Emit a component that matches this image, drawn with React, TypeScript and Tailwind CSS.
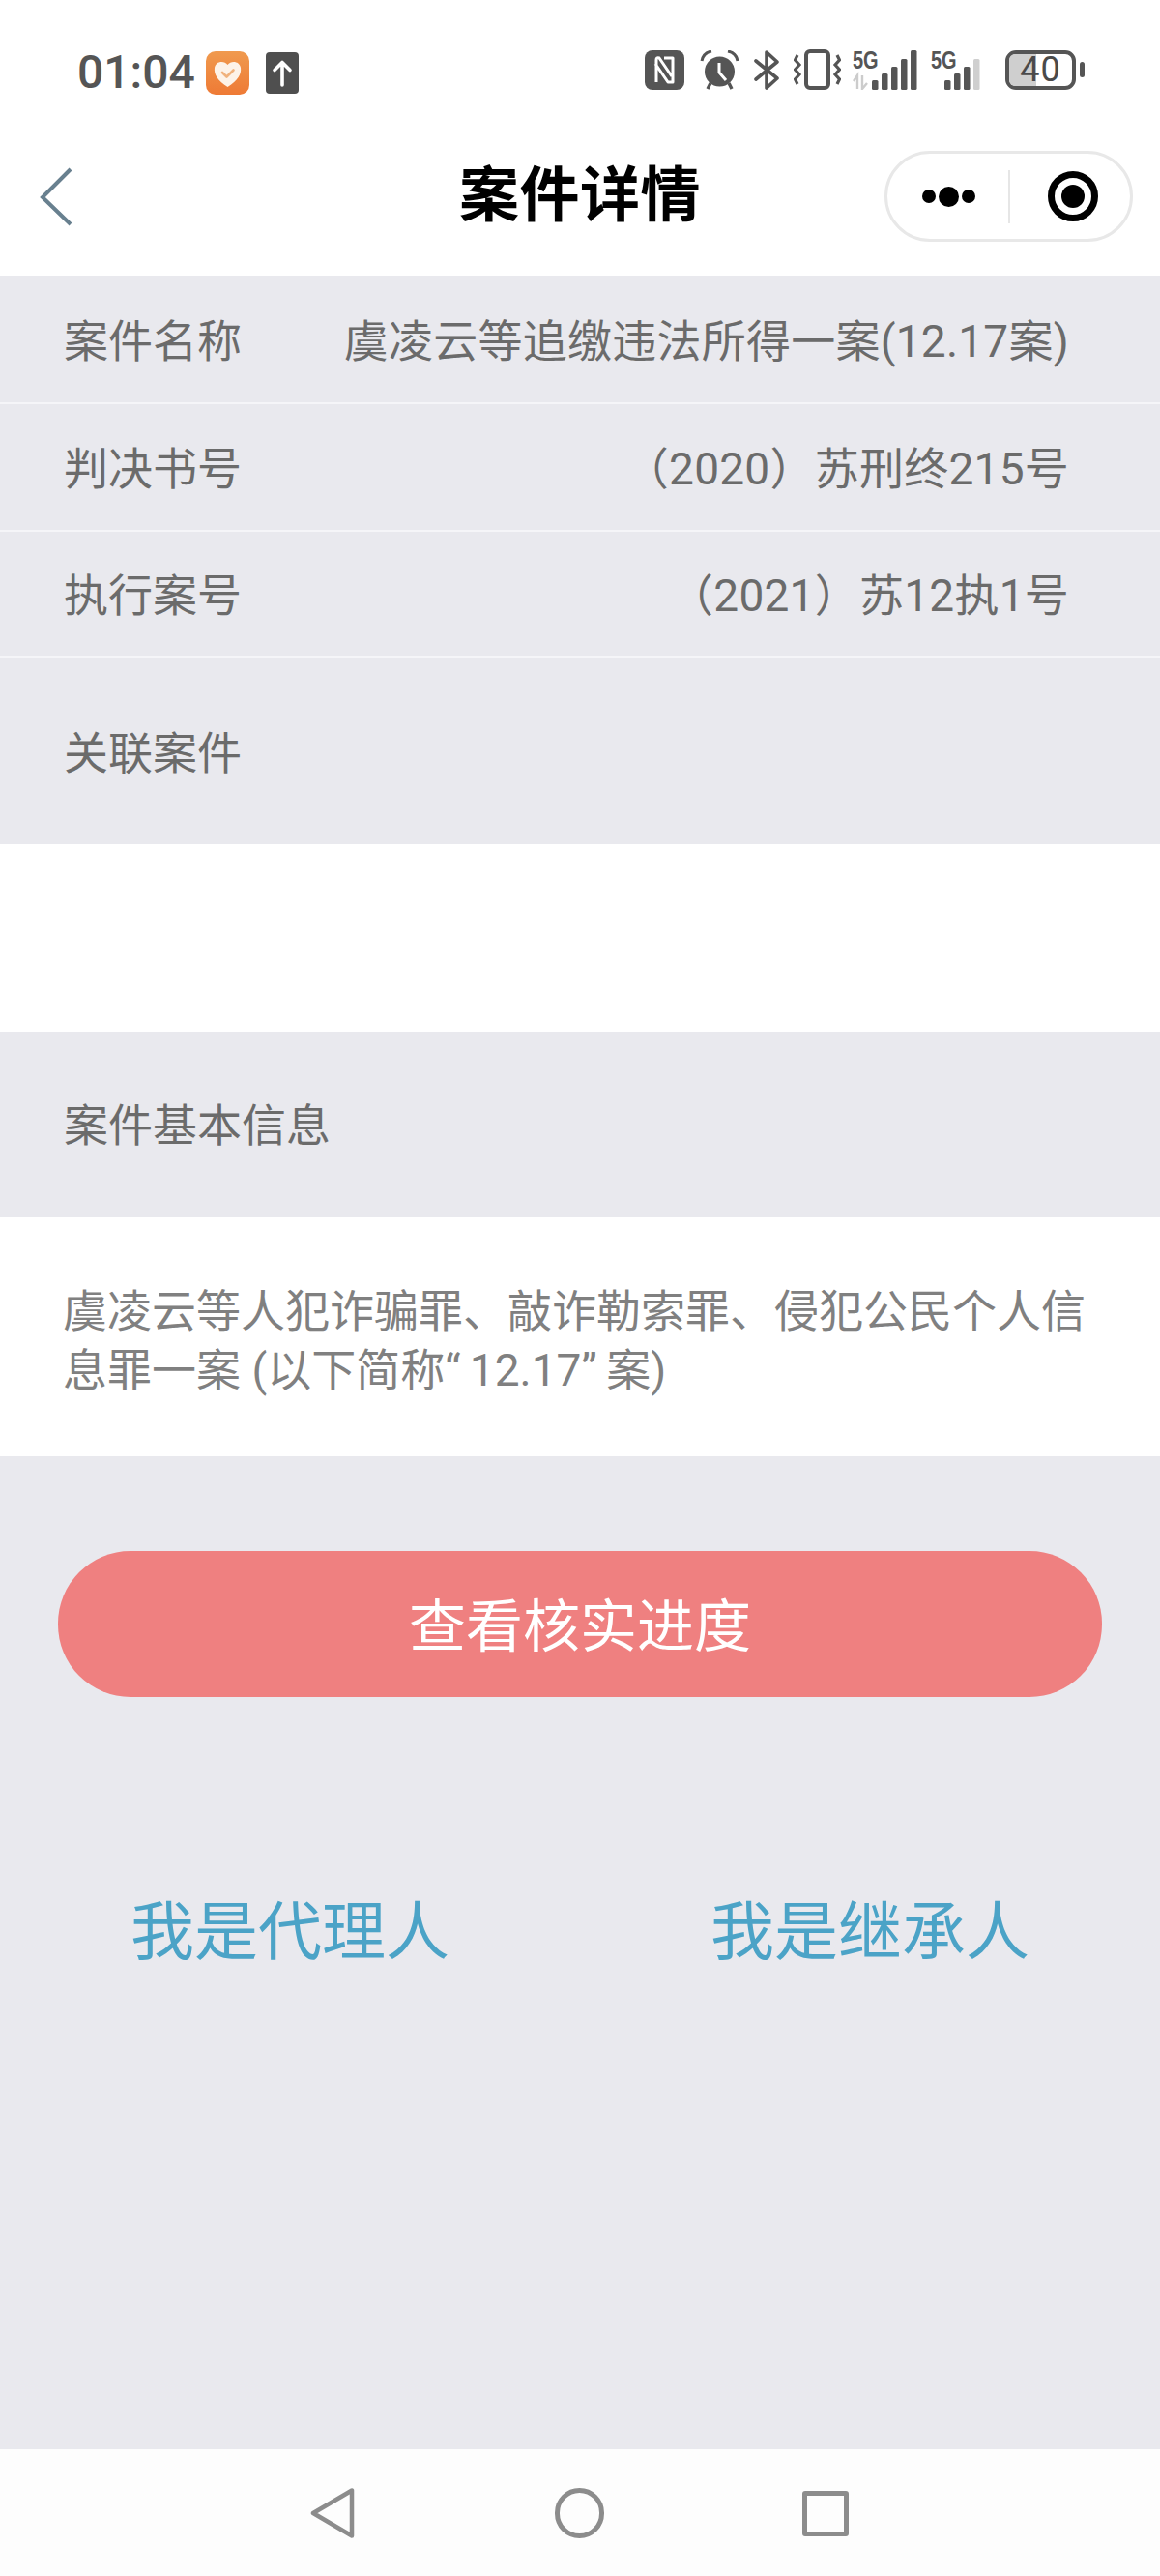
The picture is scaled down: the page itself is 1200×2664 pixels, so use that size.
const font = "font-['Roboto','Noto_Sans_CJK_SC','Noto_Sans',sans-serif]";

const description = "虞凌云等人犯诈骗罪、敲诈勒索罪、侵犯公民个人信息罪一案 (以下简称“\u200912.17”\u2009案)";

const rows = [
  { label: "案件名称", value: "虞凌云等追缴违法所得一案(12.17案)", height: "h-[133px]" },
  { label: "判决书号", value: "（2020）苏刑终215号", height: "h-[132px]" },
  { label: "执行案号", value: "（2021）苏12执1号", height: "h-[130px]" },
];

function StatusLeft() {
  return (
    <div className="flex items-center">
      <span className="w-[120px] font-['Roboto',sans-serif] text-[48px] leading-[48px] font-medium text-[#555555]">01:04</span>
      <svg className="ml-[13px] h-[45px] w-[45px]" viewBox="0 0 45 45">
        <defs>
          <linearGradient id="health" x1="0" y1="0" x2="0" y2="1">
            <stop offset="0" stopColor="#f09a4e" />
            <stop offset="1" stopColor="#ee7a35" />
          </linearGradient>
        </defs>
        <rect width="45" height="45" rx="10" fill="url(#health)" />
        <path d="M22.5 37 C12 30 8 24 9 17 C10 10 19 9 22.5 14 C26 9 35 10 36 17 C37 24 33 30 22.5 37Z" fill="#fdf3e8" />
        <path d="M17 22 L21.5 26.5 L28.5 19.5" fill="none" stroke="#f0b27c" strokeWidth="2.6" strokeLinecap="round" strokeLinejoin="round" />
      </svg>
      <svg className="ml-[17px] h-[43px] w-[34px]" viewBox="0 0 34 43">
        <rect width="34" height="43" rx="4" fill="#4f4f4f" />
        <path d="M17 34 V11 M9 18.5 L17 10.5 L25 18.5" fill="none" stroke="#ffffff" strokeWidth="3.6" strokeLinecap="round" strokeLinejoin="round" />
      </svg>
    </div>
  );
}

function Signal({ label, width, dim, arrows }: { label: string; width: number; dim: number; arrows?: boolean }) {
  const heights = [10, 17, 24, 32, 41];
  const bars = width > 62 ? heights : heights.slice(0, 4);
  const startX = width > 62 ? 20 : 14;
  return (
    <div className="relative h-[42px]" style={{ width }}>
      <span className="absolute top-0 left-0 origin-top-left scale-x-[0.8] font-['Liberation_Sans',sans-serif] text-[25px] leading-[22px] font-bold text-[#555555]">{label}</span>
      <svg className="absolute inset-0" style={{ width, height: 42 }} viewBox={`0 0 ${width} 42`}>
        {arrows && <path d="M5 41 V27 L1 33 M10 27 V41 L15 35" fill="none" stroke="#cccccc" strokeWidth="2.4" />}
        {bars.map((h, i) => (
          <rect key={i} x={startX + i * 10} y={42 - h} width="6.5" height={h} rx="1.5" fill={i >= bars.length - dim ? "#cfcfcf" : "#555555"} />
        ))}
      </svg>
    </div>
  );
}

function StatusRight() {
  return (
    <div className="flex items-center">
      <svg className="h-[41px] w-[41px]" viewBox="0 0 41 41">
        <rect width="41" height="41" rx="8" fill="#555555" />
        <path d="M12 33 V10 Q12 7 15 8 L28 27 M20 8 H29 V33 H24 L11 14" fill="none" stroke="#ffffff" strokeWidth="3" strokeLinejoin="round" />
      </svg>
      <svg className="ml-[16px] h-[41px] w-[41px]" viewBox="0 0 41 41">
        <circle cx="20.5" cy="22" r="15.5" fill="#555555" />
        <path d="M20 13 V23 L27 31" fill="none" stroke="#ffffff" strokeWidth="3" />
        <path d="M2 11 C3 5 7 2 12 1 M39 11 C38 5 34 2 29 1" fill="none" stroke="#555555" strokeWidth="3" />
        <path d="M8 40 L11 34 M33 40 L30 34" stroke="#555555" strokeWidth="3.4" />
      </svg>
      <svg className="ml-[15px] h-[41px] w-[27px]" viewBox="0 0 27 41">
        <path d="M2 11 L24 29 L13 39 V2 L24 12 L2 30" fill="none" stroke="#555555" strokeWidth="3.6" strokeLinejoin="round" strokeLinecap="round" />
      </svg>
      <svg className="ml-[14px] h-[42px] w-[49px]" viewBox="0 0 49 42">
        <rect x="13" y="2" width="23" height="38" rx="4" fill="none" stroke="#555555" strokeWidth="4" />
        <path d="M4 6 L1.5 11 L6 16 L1.5 21 L6 26 L1.5 31 L4 36 M45 6 L47.5 11 L43 16 L47.5 21 L43 26 L47.5 31 L45 36" fill="none" stroke="#555555" strokeWidth="3.2" />
      </svg>
      <div className="ml-[12px]"><Signal label="5G" width={68} dim={0} arrows /></div>
      <div className="ml-[13px]"><Signal label="5G" width={61} dim={1} /></div>
      <div className="relative ml-[16px] h-[41px] w-[73px] rounded-[11px] border-[4px] border-[#555555]">
        <div className="h-full w-[28px] rounded-l-[6px] bg-[#cfcfcf]" />
        <span className="absolute inset-0 flex items-center justify-center font-['Roboto',sans-serif] text-[36px] leading-none tracking-[1px] text-[#4a4a4a]">40</span>
      </div>
      <div className="ml-[4px] h-[16px] w-[5px] rounded-full bg-[#555555]" />
    </div>
  );
}

function Capsule() {
  return (
    <div className="flex h-[94px] w-[257px] items-center rounded-full border-[3px] border-[#e8e8e8] bg-white">
      <div className="flex w-[125px] items-center justify-center gap-[3px] pl-[2px]">
        <span className="h-[14px] w-[14px] rounded-full bg-black" />
        <span className="h-[21px] w-[21px] rounded-full bg-black" />
        <span className="h-[14px] w-[14px] rounded-full bg-black" />
      </div>
      <div className="h-[55px] w-[2px] bg-[#e6e6e6]" />
      <div className="ml-[39px] flex h-[52px] w-[52px] items-center justify-center rounded-full border-[7px] border-black">
        <span className="h-[24px] w-[24px] rounded-full bg-black" />
      </div>
    </div>
  );
}

export default function App() {
  return (
    <div className={`${font} flex h-[2664px] w-full flex-col overflow-hidden bg-white`}>
      <div className="flex h-[121px] items-start justify-between pt-[51px] pr-[78px] pl-[80px]">
        <StatusLeft />
        <StatusRight />
      </div>

      <div className="grid h-[164px] grid-cols-[1fr_auto_1fr] items-center">
        <svg className="ml-[40px] h-[64px] w-[38px]" viewBox="0 0 38 64">
          <path d="M33 4 L4 33 L33 61" fill="none" stroke="#68808f" strokeWidth="4" />
        </svg>
        <h1 className="text-[62px] leading-[80px] font-bold tracking-[0.5px] text-black">案件详情</h1>
        <div className="flex justify-end pr-[28px]">
          <Capsule />
        </div>
      </div>

      {rows.map((row) => (
        <div key={row.label} className={`${row.height} flex items-center justify-between border-b-[2px] border-[#f5f5f8] bg-[#e9e9ee] pt-[5px] pr-[94px] pl-[66px] text-[46px] text-[#6b6b6b]`}>
          <span>{row.label}</span>
          <span className="tracking-[0.25px]">{row.value}</span>
        </div>
      ))}
      <div className="flex h-[193px] items-center bg-[#e9e9ee] pt-[5px] pl-[66px] text-[46px] text-[#6b6b6b]">关联案件</div>
      <div className="h-[194px] bg-white" />
      <div className="flex h-[192px] items-center bg-[#e9e9ee] pt-[2px] pl-[66px] text-[46px] text-[#6b6b6b]">案件基本信息</div>
      <div className="flex h-[247px] items-center bg-white pt-[8px] pr-[60px] pl-[65px]">
        <p className="text-[46px] leading-[61px] text-[#808080]">{description}</p>
      </div>

      <div className="flex-1 bg-[#e9e9ee] px-[60px] pt-[98px]">
        <button className="flex h-[151px] w-full items-center justify-center rounded-[75px] bg-[#ef8080] pt-[8px] text-[59px] text-white">查看核实进度</button>
        <div className="mt-[206px] -mx-[60px] grid grid-cols-2 text-center text-[66px] leading-[76px] text-[#4ba3c7]">
          <span>我是代理人</span>
          <span>我是继承人</span>
        </div>
      </div>

      <div className="flex h-[131px] items-start bg-[#fdfdfd] pt-[40px] pl-[321px]">
        <svg className="h-[52px] w-[46px]" viewBox="0 0 46 52">
          <path d="M3 26 L43 2.5 V49.5 Z" fill="none" stroke="#8c8c8c" strokeWidth="4.5" strokeLinejoin="round" />
        </svg>
        <div className="ml-[207px] h-[52px] w-[51px] rounded-full border-[5px] border-[#8c8c8c]" />
        <div className="mt-[3px] ml-[205px] h-[47px] w-[48px] rounded-[3px] border-[5px] border-[#8c8c8c]" />
      </div>
    </div>
  );
}
